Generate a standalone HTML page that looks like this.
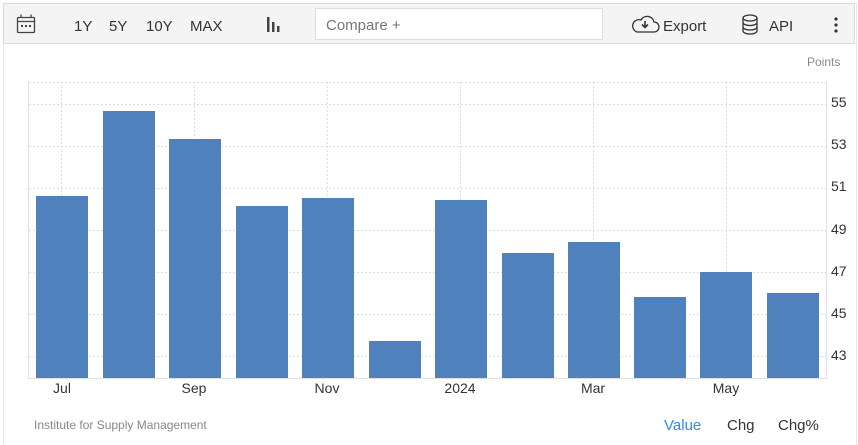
<!DOCTYPE html>
<html><head><meta charset="utf-8"><style>
html,body{margin:0;padding:0;background:#fff;width:858px;height:445px;overflow:hidden;font-family:"Liberation Sans",Arial,sans-serif;}
.frame{position:absolute;left:3px;top:3px;width:852px;height:442px;border-left:1px solid #e6e6e6;border-right:1px solid #e6e6e6;}
.tb{position:absolute;left:3px;top:3px;width:852px;height:41px;background:#f4f4f4;border:1px solid #dcdcdc;box-sizing:border-box;}
.t{position:absolute;font-size:15px;color:#333;top:18px;}
.cmp{position:absolute;left:315px;top:8px;width:288px;height:32px;background:#fff;border:1px solid #ddd;box-sizing:border-box;font-size:15px;color:#777;padding:8px 10px;}
svg{position:absolute;left:0;top:0}
.s{position:absolute;font-size:12px;color:#888;}
</style></head><body>
<div class="frame"></div>
<div class="tb"></div>
<svg width="858" height="445" style="z-index:1">
 <g fill="none" stroke="#444" stroke-width="1.3">
  <rect x="17.5" y="17.5" width="17" height="15" rx="1"/>
  <line x1="17.5" y1="21.5" x2="34.5" y2="21.5"/>
  <line x1="21" y1="14.5" x2="21" y2="18"/><line x1="31" y1="14.5" x2="31" y2="18"/>
 </g>
 <g fill="#444"><rect x="21" y="25" width="2" height="2"/><rect x="25" y="25" width="2" height="2"/><rect x="29" y="25" width="2" height="2"/></g>
 <g fill="#444"><rect x="267" y="17" width="2.5" height="15"/><rect x="272" y="22" width="2.5" height="10"/><rect x="277" y="26" width="2.5" height="6"/></g>
 <path d="M637 32 h17 a5 5 0 0 0 0-10 a7 7 0 0 0-13-2 a5 5 0 0 0-4 12z" fill="none" stroke="#333" stroke-width="1.3"/>
 <path d="M645 21 v6 M642 24.5 l3 3 l3-3" fill="none" stroke="#333" stroke-width="1.6"/>
 <g fill="none" stroke="#333" stroke-width="1.3">
  <ellipse cx="750" cy="18" rx="7" ry="3"/>
  <path d="M743 18 v13 a7 3 0 0 0 14 0 v-13 M743 22.5 a7 3 0 0 0 14 0 M743 27 a7 3 0 0 0 14 0"/>
 </g>
 <g fill="#333"><circle cx="836" cy="19" r="1.6"/><circle cx="836" cy="25" r="1.6"/><circle cx="836" cy="31" r="1.6"/></g>
 <g stroke="#ddd" stroke-width="1" stroke-dasharray="2,2">
  <line x1="29" y1="82.5" x2="826" y2="82.5"/>
  <line x1="29" y1="104.5" x2="826" y2="104.5"/>
  <line x1="29" y1="146.5" x2="826" y2="146.5"/>
  <line x1="29" y1="188.5" x2="826" y2="188.5"/>
  <line x1="29" y1="230.5" x2="826" y2="230.5"/>
  <line x1="29" y1="272.5" x2="826" y2="272.5"/>
  <line x1="29" y1="314.5" x2="826" y2="314.5"/>
  <line x1="29" y1="356.5" x2="826" y2="356.5"/>
  <line x1="61.5" y1="82" x2="61.5" y2="378"/>
  <line x1="194.5" y1="82" x2="194.5" y2="378"/>
  <line x1="327.5" y1="82" x2="327.5" y2="378"/>
  <line x1="460.5" y1="82" x2="460.5" y2="378"/>
  <line x1="593.5" y1="82" x2="593.5" y2="378"/>
  <line x1="726.5" y1="82" x2="726.5" y2="378"/>
 </g>
 <g stroke="#e0e0e0"><line x1="28.5" y1="82" x2="28.5" y2="378"/><line x1="826.5" y1="82" x2="826.5" y2="378"/><line x1="28" y1="378.5" x2="827" y2="378.5"/></g>
 <g fill="#4f81bd">
  <rect x="36" y="196" width="52" height="182"/>
  <rect x="103" y="111" width="52" height="267"/>
  <rect x="169" y="139" width="52" height="239"/>
  <rect x="236" y="206" width="52" height="172"/>
  <rect x="302" y="198" width="52" height="180"/>
  <rect x="369" y="341" width="52" height="37"/>
  <rect x="435" y="200" width="52" height="178"/>
  <rect x="502" y="253" width="52" height="125"/>
  <rect x="568" y="242" width="52" height="136"/>
  <rect x="634" y="297" width="52" height="81"/>
  <rect x="700" y="272" width="52" height="106"/>
  <rect x="767" y="293" width="52" height="85"/>
 </g>
 <g font-family="Liberation Sans,Arial,sans-serif" font-size="14" fill="#333">
  <text x="831" y="107">55</text><text x="831" y="149">53</text><text x="831" y="191">51</text><text x="831" y="234">49</text><text x="831" y="276">47</text><text x="831" y="318">45</text><text x="831" y="360">43</text>
  <g text-anchor="middle"><text x="62" y="393">Jul</text><text x="194" y="393">Sep</text><text x="327" y="393">Nov</text><text x="460" y="393">2024</text><text x="593" y="393">Mar</text><text x="726" y="393">May</text></g>
 </g>
</svg>
<div class="t" style="left:74px;z-index:2">1Y</div>
<div class="t" style="left:109px;z-index:2">5Y</div>
<div class="t" style="left:146px;z-index:2">10Y</div>
<div class="t" style="left:190px;z-index:2">MAX</div>
<div class="cmp" style="z-index:2">Compare +</div>
<div class="t" style="left:663px;z-index:2">Export</div>
<div class="t" style="left:769px;z-index:2">API</div>
<div class="s" style="left:807px;top:55px;">Points</div>
<div class="s" style="left:34px;top:418px;">Institute for Supply Management</div>
<div class="t" style="left:664px;top:417px;color:#2d8ae6;">Value</div>
<div class="t" style="left:727px;top:417px;">Chg</div>
<div class="t" style="left:778px;top:417px;">Chg%</div>
</body></html>
